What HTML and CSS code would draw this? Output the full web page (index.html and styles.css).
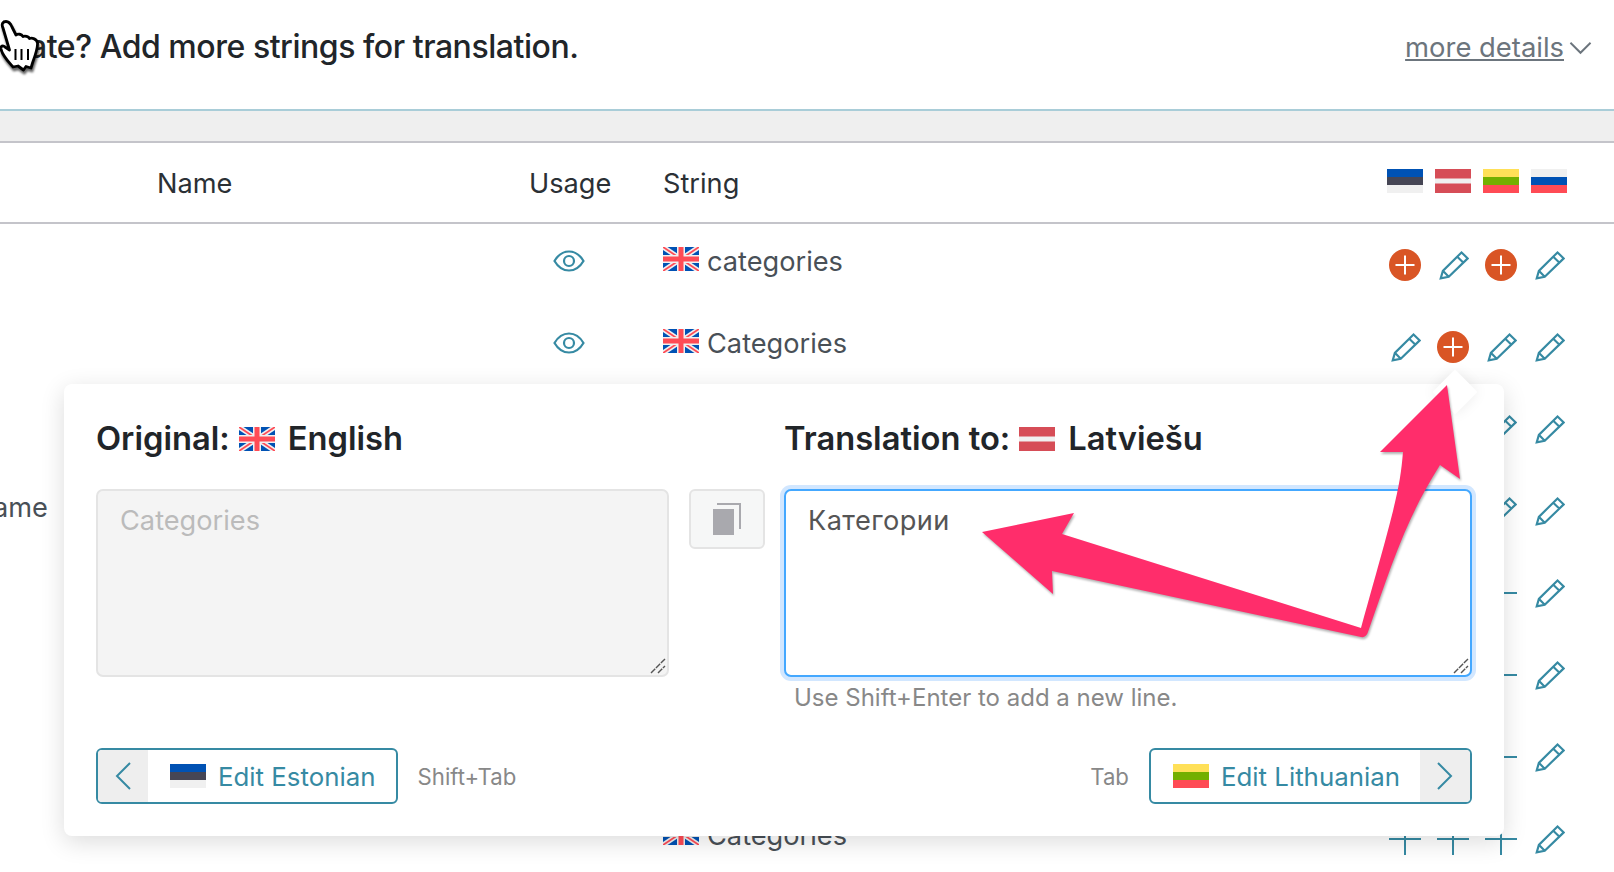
FILE: index.html
```html
<!DOCTYPE html>
<html lang="en">
<head>
    <meta charset="UTF-8">
    <meta name="viewport" content="width=device-width, initial-scale=1.0">
    <title>Translate strings</title>
    <link rel="stylesheet" href="styles.css">
</head>
<body>
    <svg class="sprites" width="0" height="0">
        <symbol id="flag_uk" viewBox="0 0 36 24">
            <rect width="36" height="24" fill="#0052b4"/>
            <path d="M0 0L36 24M36 0L0 24" stroke="#f0f0f0" stroke-width="5"/>
            <path d="M0 0L36 24M36 0L0 24" stroke="#ff4b55" stroke-width="1.8"/>
            <path d="M18 0V24M0 12H36" stroke="#f0f0f0" stroke-width="8"/>
            <path d="M18 0V24M0 12H36" stroke="#ff4b55" stroke-width="5"/>
        </symbol>
        <symbol id="flag_ee" viewBox="0 0 36 24">
            <rect width="36" height="8" fill="#0052b4"/>
            <rect y="8" width="36" height="8" fill="#464655"/>
            <rect y="16" width="36" height="8" fill="#f0f0f0"/>
        </symbol>
        <symbol id="flag_lv" viewBox="0 0 36 24">
            <rect width="36" height="24" fill="#d64d57"/>
            <rect y="9.5" width="36" height="5" fill="#f0f0f0"/>
        </symbol>
        <symbol id="flag_lt" viewBox="0 0 36 24">
            <rect width="36" height="8" fill="#ffe058"/>
            <rect y="8" width="36" height="8" fill="#73af00"/>
            <rect y="16" width="36" height="8" fill="#ff4b55"/>
        </symbol>
        <symbol id="flag_ru" viewBox="0 0 36 24">
            <rect width="36" height="8" fill="#f0f0f0"/>
            <rect y="8" width="36" height="8" fill="#0052b4"/>
            <rect y="16" width="36" height="8" fill="#ff4b55"/>
        </symbol>
        <symbol id="icon_eye" viewBox="0 0 32 22">
            <path d="M1.5 11C5 5 10 1.5 16 1.5S27 5 30.500 11C27 17 22 20.500 16 20.500S5 17 1.500 11Z" fill="none" stroke="currentColor" stroke-width="2.200"/>
            <circle cx="16" cy="11" r="5" fill="none" stroke="currentColor" stroke-width="2.200"/>
        </symbol>
        <symbol id="icon_pencil" viewBox="-2 -1 30 30">
            <path d="M1.500 26.500L3.500 19.500L21 2.200L26.800 7.800L9 25ZM3.500 19.500L9 25M17 6.200L22.800 11.800" fill="none" stroke="currentColor" stroke-width="2"/>
        </symbol>
        <symbol id="icon_add" viewBox="0 0 32 32">
            <circle cx="16" cy="16" r="16" fill="#d95525"/>
            <path d="M6.500 16H25.500M16 6.500V25.500" stroke="#fff" stroke-width="2"/>
        </symbol>
        <symbol id="icon_plus" viewBox="0 0 32 32">
            <path d="M0 16H32M16 0V32" stroke="currentColor" stroke-width="2"/>
        </symbol>
        <symbol id="icon_grip" viewBox="0 0 16 16">
            <path d="M1 15L15 1M8 15L15 8" fill="none" stroke="#555" stroke-width="1.400" stroke-dasharray="6 1"/>
        </symbol>
    </svg>

    <header class="topbar">
        <h1 class="topbar_title">ate? Add more strings for translation.</h1>
        <a class="more_details" href="#"><span>more details</span>
            <svg class="more_chevron" viewBox="0 0 24 14"><path d="M1.500 1.500L12 12L22.500 1.500" fill="none" stroke="currentColor" stroke-width="2"/></svg>
        </a>
    </header>
    <div class="band"></div>

    <section class="strings">
        <div class="row head_row">
            <div class="cell_name">Name</div>
            <div class="cell_usage">Usage</div>
            <div class="cell_string">String</div>
            <div class="cell_langs">
                <svg class="flag"><use href="#flag_ee"/></svg>
                <svg class="flag"><use href="#flag_lv"/></svg>
                <svg class="flag"><use href="#flag_lt"/></svg>
                <svg class="flag"><use href="#flag_ru"/></svg>
            </div>
        </div>

        <div class="row">
            <div class="cell_name"></div>
            <div class="cell_usage"><svg class="eye"><use href="#icon_eye"/></svg></div>
            <div class="cell_string"><svg class="flag"><use href="#flag_uk"/></svg>categories</div>
            <div class="cell_langs">
                <svg class="action"><use href="#icon_add"/></svg>
                <svg class="action"><use href="#icon_pencil"/></svg>
                <svg class="action"><use href="#icon_add"/></svg>
                <svg class="action"><use href="#icon_pencil"/></svg>
            </div>
        </div>
        <div class="row">
            <div class="cell_name"></div>
            <div class="cell_usage"><svg class="eye"><use href="#icon_eye"/></svg></div>
            <div class="cell_string"><svg class="flag"><use href="#flag_uk"/></svg>Categories</div>
            <div class="cell_langs">
                <svg class="action"><use href="#icon_pencil"/></svg>
                <svg class="action"><use href="#icon_add"/></svg>
                <svg class="action"><use href="#icon_pencil"/></svg>
                <svg class="action"><use href="#icon_pencil"/></svg>
            </div>
        </div>
        <div class="row">
            <div class="cell_name"></div>
            <div class="cell_usage"></div>
            <div class="cell_string"></div>
            <div class="cell_langs">
                <svg class="action"><use href="#icon_pencil"/></svg>
                <svg class="action"><use href="#icon_pencil"/></svg>
                <svg class="action"><use href="#icon_pencil"/></svg>
                <svg class="action"><use href="#icon_pencil"/></svg>
            </div>
        </div>
        <div class="row">
            <div class="cell_name cell_name_cut">ame</div>
            <div class="cell_usage"></div>
            <div class="cell_string"></div>
            <div class="cell_langs">
                <svg class="action"><use href="#icon_pencil"/></svg>
                <svg class="action"><use href="#icon_pencil"/></svg>
                <svg class="action"><use href="#icon_pencil"/></svg>
                <svg class="action"><use href="#icon_pencil"/></svg>
            </div>
        </div>
        <div class="row">
            <div class="cell_name"></div>
            <div class="cell_usage"></div>
            <div class="cell_string"></div>
            <div class="cell_langs">
                <svg class="action"><use href="#icon_pencil"/></svg>
                <svg class="action"><use href="#icon_pencil"/></svg>
                <svg class="action"><use href="#icon_plus"/></svg>
                <svg class="action"><use href="#icon_pencil"/></svg>
            </div>
        </div>
        <div class="row">
            <div class="cell_name"></div>
            <div class="cell_usage"></div>
            <div class="cell_string"></div>
            <div class="cell_langs">
                <svg class="action"><use href="#icon_pencil"/></svg>
                <svg class="action"><use href="#icon_pencil"/></svg>
                <svg class="action"><use href="#icon_plus"/></svg>
                <svg class="action"><use href="#icon_pencil"/></svg>
            </div>
        </div>
        <div class="row">
            <div class="cell_name"></div>
            <div class="cell_usage"></div>
            <div class="cell_string"></div>
            <div class="cell_langs">
                <svg class="action"><use href="#icon_pencil"/></svg>
                <svg class="action"><use href="#icon_pencil"/></svg>
                <svg class="action"><use href="#icon_plus"/></svg>
                <svg class="action"><use href="#icon_pencil"/></svg>
            </div>
        </div>
        <div class="row">
            <div class="cell_name"></div>
            <div class="cell_usage"></div>
            <div class="cell_string"><svg class="flag"><use href="#flag_uk"/></svg>Categories</div>
            <div class="cell_langs">
                <svg class="action"><use href="#icon_plus"/></svg>
                <svg class="action"><use href="#icon_plus"/></svg>
                <svg class="action"><use href="#icon_plus"/></svg>
                <svg class="action"><use href="#icon_pencil"/></svg>
            </div>
        </div>
    </section>

    <section class="popover">
        <div class="editor">
            <h2 class="editor_title">Original: <svg class="flag"><use href="#flag_uk"/></svg> English</h2>
            <div></div>
            <h2 class="editor_title">Translation to: <svg class="flag"><use href="#flag_lv"/></svg> Latviešu</h2>

            <div class="field_wrap">
                <textarea class="field field_original" readonly placeholder="Categories"></textarea>
                <svg class="grip"><use href="#icon_grip"/></svg>
            </div>
            <button class="copy_btn" type="button">
                <svg class="copy_icon" viewBox="0 0 28 32">
                    <rect x="0" y="6" width="21" height="26" fill="currentColor"/>
                    <path d="M4 1H27V26" fill="none" stroke="currentColor" stroke-width="2"/>
                </svg>
            </button>
            <div>
                <div class="field_wrap">
                    <textarea class="field field_active" readonly>Категории</textarea>
                    <svg class="grip"><use href="#icon_grip"/></svg>
                </div>
                <p class="hint">Use Shift+Enter to add a new line.</p>
            </div>
        </div>

        <div class="editor_nav">
            <div class="nav_group">
                <a class="nav_btn" href="#">
                    <span class="nav_side"><svg class="nav_chevron" viewBox="0 0 16 28"><path d="M15 1L2 14L15 27" fill="none" stroke="currentColor" stroke-width="2"/></svg></span>
                    <span class="nav_label"><svg class="flag"><use href="#flag_ee"/></svg>Edit Estonian</span>
                </a>
                <span class="shortcut">Shift+Tab</span>
            </div>
            <div class="nav_group">
                <span class="shortcut">Tab</span>
                <a class="nav_btn" href="#">
                    <span class="nav_label"><svg class="flag"><use href="#flag_lt"/></svg>Edit Lithuanian</span>
                    <span class="nav_side"><svg class="nav_chevron" viewBox="0 0 16 28"><path d="M1 1L14 14L1 27" fill="none" stroke="currentColor" stroke-width="2"/></svg></span>
                </a>
            </div>
        </div>
    </section>

    <!-- annotation arrow drawn on top of the screenshot -->
    <svg class="annotation" viewBox="0 0 1614 872">
        <path d="M1447 385L1380 452L1403 452C1400 490 1394 510 1361 628L1062 534L1074 513L982 532L1053 594L1052 571L1361 637Q1366 638 1368 632C1390 570 1405 520 1440 465L1460 479Z" fill="#ff2d6b"/>
    </svg>

    <svg class="cursor" viewBox="0 0 40 56">
        <path d="M3 8C1 4 3 1.500 6 1.500C8.500 1.500 10.500 3.500 12 7L16 15C18 13.500 21.500 14 23 16.500C25 15.500 28.500 16.500 29.500 18.500C32 17.500 37 19 37.500 23C38 28 35 36 32.500 43L31 48L26 46.500L23.500 50L18 46L13 47C9 42 2.500 36 1 29C.5 26 3 25 5 27L9.500 30Z" fill="#fff" stroke="#000" stroke-width="2.800" stroke-linejoin="round"/>
        <path d="M15.500 29V40M21.500 29V40M28 29V40" stroke="#000" stroke-width="2"/>
    </svg>
</body>
</html>
```

FILE: styles.css
```css
* {
    margin: 0;
    padding: 0;
    box-sizing: border-box;
    font-family: "Inter", "Noto Sans", sans-serif;
}
body {
    width: 1614px;
    height: 872px;
    overflow: hidden;
    position: relative;
    background: #fff;
    color: #212529;
}
.sprites {
    position: absolute;
}
.flag {
    width: 36px;
    height: 24px;
    flex: none;
}

/* top bar */
.topbar {
    height: 111px;
    display: flex;
    justify-content: space-between;
    align-items: center;
    padding: 0 22px 16px 29px;
    border-bottom: 2px solid #a9cdd8;
}
.topbar_title {
    font-size: 32px;
    font-weight: 500;
    letter-spacing: -0.46px;
}
.more_details {
    display: flex;
    align-items: center;
    gap: 5px;
    font-size: 27.4px;
    color: #6c757d;
}
.more_chevron {
    width: 23px;
    height: 14px;
    margin-top: 2px;
}
.band {
    height: 32px;
    background: #efefef;
    border-bottom: 2px solid #c4c4ca;
}

/* table */
.strings {
    font-size: 27.2px;
}
.row {
    height: 82px;
    display: grid;
    grid-template-columns: 529px 134px 1fr auto;
    align-items: center;
    padding-right: 49px;
}
.head_row {
    height: 81px;
    border-bottom: 2px solid #c4c4ca;
    color: #2b3035;
}
.head_row .cell_langs {
    gap: 12px;
    margin: 0 -2px 4px 0;
}
.head_row .cell_usage,
.head_row .cell_string,
.head_row .cell_name {
    padding: 2px 0 0;
    color: #2b3035;
}
.head_row .cell_name {
    padding-left: 157px;
}
.cell_name_cut {
    padding-bottom: 8px;
    margin-left: -7px;
    color: #495057;
}
.cell_usage {
    padding-bottom: 8px;
    color: #368aa3;
}
.cell_string {
    display: flex;
    align-items: center;
    gap: 8px;
    padding-bottom: 8px;
    color: #495057;
}
.cell_string .flag {
    margin-bottom: 4px;
}
.cell_langs {
    display: flex;
    gap: 16px;
    color: #368aa3;
}
.eye {
    display: block;
    width: 32px;
    height: 22px;
    margin-left: 24px;
}
.action {
    display: block;
    width: 32px;
    height: 32px;
}

/* translation popover */
.popover {
    position: absolute;
    left: 64px;
    top: 384px;
    width: 1440px;
    height: 452px;
    padding: 32px;
    background: #fff;
    border-radius: 8px;
    box-shadow: 0 6px 24px rgba(0, 0, 0, 0.14);
    z-index: 5;
}
.popover::before {
    content: "";
    position: absolute;
    left: 1375px;
    top: -8px;
    width: 32px;
    height: 32px;
    background: #fff;
    transform: rotate(45deg);
    box-shadow: 0 0 14px rgba(0, 0, 0, 0.08);
    z-index: -1;
}
.editor {
    display: grid;
    grid-template-columns: 573px 75px 1fr;
    grid-template-rows: 73px auto;
    column-gap: 20px;
    align-items: start;
}
.editor_title {
    display: flex;
    align-items: center;
    gap: 9px;
    font-size: 32.7px;
    font-weight: 600;
    height: 44px;
}
.editor_title .flag {
    margin: 2px 4px 0 0;
}
.field_wrap {
    position: relative;
}
.field {
    display: block;
    width: 100%;
    height: 188px;
    padding: 12px 22px;
    font-size: 27.2px;
    line-height: 36px;
    border-radius: 7px;
    outline: none;
    resize: none;
}
.field_original {
    background: #f4f4f4;
    border: 2px solid #e4e4e4;
}
.field_original::placeholder {
    color: #bbb;
    opacity: 1;
}
.field_active {
    background: #fff;
    border: 2px solid #44a8ff;
    box-shadow: 0 0 0 4px #d2e7ff;
    color: #555;
    letter-spacing: 0.4px;
}
.grip {
    position: absolute;
    right: 3px;
    bottom: 3px;
    width: 16px;
    height: 16px;
}
.copy_btn {
    width: 76px;
    height: 60px;
    background: #f6f7f7;
    border: 2px solid #e4e4e4;
    border-radius: 6px;
    display: flex;
    align-items: center;
    justify-content: center;
    color: #a9a9ae;
}
.copy_icon {
    width: 28px;
    height: 32px;
}
.hint {
    margin: 5px 0 0 10px;
    font-size: 24px;
    line-height: 32px;
    color: #888;
}
.editor_nav {
    display: flex;
    justify-content: space-between;
    margin-top: 34px;
}
.nav_group {
    display: flex;
    align-items: center;
    gap: 20px;
}
.nav_btn {
    display: flex;
    height: 56px;
    border: 2px solid #368aa3;
    border-radius: 6px;
    overflow: hidden;
    color: #368aa3;
    font-size: 25.85px;
    text-decoration: none;
}
.nav_side {
    width: 50px;
    display: flex;
    align-items: center;
    justify-content: center;
    background: #eee;
}
.nav_chevron {
    width: 16px;
    height: 28px;
}
.nav_label {
    display: flex;
    align-items: center;
    gap: 12px;
    padding: 0 20px 0 22px;
}
.shortcut {
    font-size: 22.2px;
    color: #888;
}

/* overlays */
.annotation {
    position: absolute;
    left: 0;
    top: 0;
    width: 1614px;
    height: 872px;
    z-index: 6;
    pointer-events: none;
    filter: drop-shadow(1px 2px 1px rgba(0, 0, 0, 0.3));
}
.cursor {
    position: absolute;
    left: 0;
    top: 20px;
    width: 40px;
    height: 56px;
    z-index: 7;
    filter: drop-shadow(1px 3px 1px rgba(0, 0, 0, 0.6));
}
```
